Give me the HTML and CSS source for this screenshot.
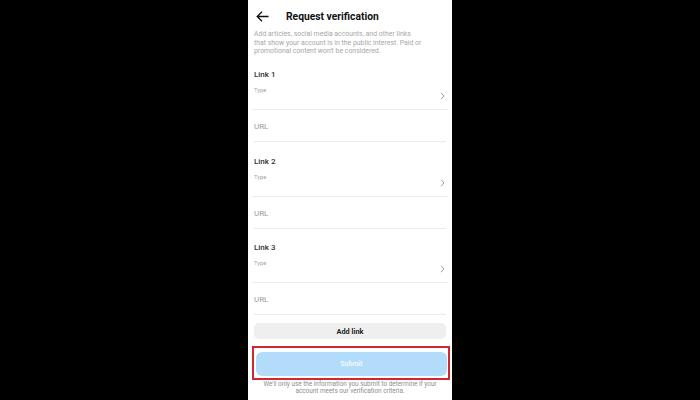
FILE: index.html
```html
<!DOCTYPE html>
<html lang="en">
  <head>
    <meta charset="utf-8" />
    <title>Request verification</title>
    <link rel="stylesheet" href="styles.css">
  </head>
  <body>
    <div class="screen">
      <div class="header">
        <svg class="back" width="13" height="11" viewBox="0 0 13 11">
          <path d="M12.5 5.5H1.2M6 0.8L1.2 5.5L6 10.2" fill="none" stroke="#111" stroke-width="1.3" />
        </svg>
        <span class="title">Request verification</span>
      </div>

      <p class="desc">
        Add articles, social media accounts, and other links<br />
        that show your account is in the public interest. Paid or<br />
        promotional content won't be considered.
      </p>

      <div class="group">
        <div class="label">Link 1</div>
        <div class="type-row">
          <span class="type">Type</span>
          <svg class="chev" width="5" height="8" viewBox="0 0 5 8"><path d="M1 0.8L4 4L1 7.2" fill="none" stroke="#9c9c9c" stroke-width="1" /></svg>
        </div>
        <div class="url-row">URL</div>
      </div>

      <div class="group">
        <div class="label">Link 2</div>
        <div class="type-row">
          <span class="type">Type</span>
          <svg class="chev" width="5" height="8" viewBox="0 0 5 8"><path d="M1 0.8L4 4L1 7.2" fill="none" stroke="#9c9c9c" stroke-width="1" /></svg>
        </div>
        <div class="url-row">URL</div>
      </div>

      <div class="group">
        <div class="label">Link 3</div>
        <div class="type-row">
          <span class="type">Type</span>
          <svg class="chev" width="5" height="8" viewBox="0 0 5 8"><path d="M1 0.8L4 4L1 7.2" fill="none" stroke="#9c9c9c" stroke-width="1" /></svg>
        </div>
        <div class="url-row">URL</div>
      </div>

      <button class="add">Add link</button>

      <div class="highlight">
        <button class="submit">Submit</button>
      </div>

      <p class="note">
        We'll only use the information you submit to determine if your<br />
        account meets our verification criteria.
      </p>
    </div>
  </body>
</html>
```

FILE: styles.css
```css
html,
body {
  margin: 0;
  height: 100%;
  background: #000;
  font-family: Roboto, "Liberation Sans", sans-serif;
}

.screen {
  width: 204px;
  height: 400px;
  margin: 0 auto;
  padding: 0 6px;
  box-sizing: border-box;
  background: #fff;
  overflow: hidden;
}

.header {
  height: 30px;
  display: flex;
  align-items: center;
  padding-left: 2px;
  padding-top: 2px;
  box-sizing: border-box;
}

.back {
  display: block;
}

.title {
  margin-left: 17px;
  font-size: 10.3px;
  font-weight: 700;
  color: #111;
}

.desc {
  margin: 0;
  font-size: 6.9px;
  line-height: 8.5px;
  color: #a8a8a8;
  white-space: nowrap;
}

.label {
  margin-top: 13.5px;
  line-height: 12px;
  font-size: 8px;
  font-weight: 500;
  color: #333;
}

.type-row {
  height: 29px;
  display: flex;
  justify-content: space-between;
  align-items: flex-start;
  border-bottom: 1px solid #ececec;
  box-sizing: border-box;
  margin: 0 -2px;
  padding: 0 2px;
}

.type {
  margin-top: 5px;
  line-height: 8px;
  font-size: 5.8px;
  color: #a6a6a6;
}

.chev {
  display: block;
  margin-top: 11px;
  margin-right: 1px;
}

.url-row {
  height: 32px;
  padding-top: 12px;
  box-sizing: border-box;
  line-height: 10px;
  font-size: 8px;
  color: #9a9a9a;
  border-bottom: 1px solid #ececec;
}

.add {
  display: block;
  width: 100%;
  height: 16px;
  margin-top: 8px;
  border: 0;
  border-radius: 5px;
  background: #efefef;
  font-family: inherit;
  font-size: 7.4px;
  font-weight: 700;
  color: #262626;
  padding: 0;
}

.highlight {
  margin: 7px -4px 0 -2px;
  padding: 4px 1px 2px 2px;
  border: 2px solid #d0282e;
}

.submit {
  display: block;
  width: 100%;
  height: 24px;
  border: 0;
  border-radius: 6px;
  background: #b3dcfa;
  font-family: inherit;
  font-size: 7px;
  font-weight: 700;
  color: #eef8ff;
  padding: 0;
}

.note {
  margin: 1px 0 0;
  text-align: center;
  font-size: 6.4px;
  line-height: 7px;
  color: #8e8e8e;
  white-space: nowrap;
}
```
